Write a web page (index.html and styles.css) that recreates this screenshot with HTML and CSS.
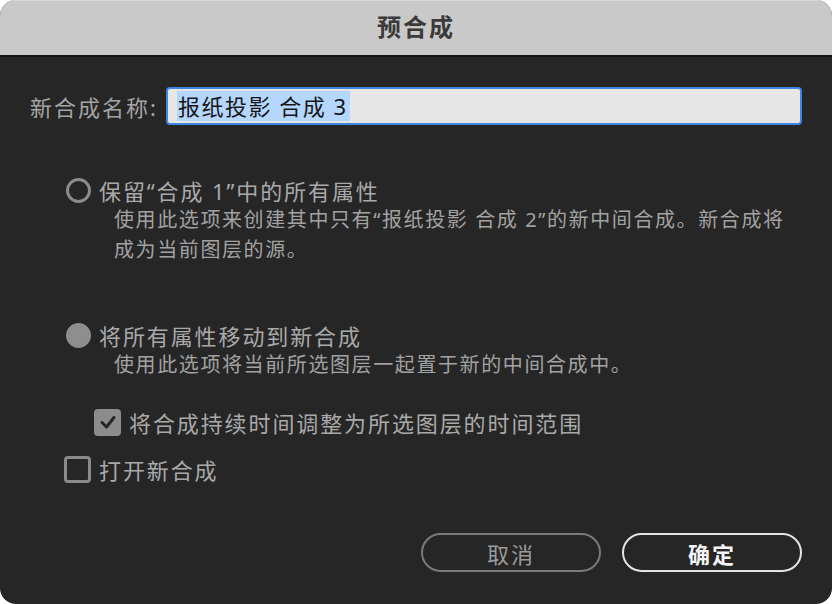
FILE: index.html
```html
<!DOCTYPE html>
<html lang="zh-CN">
<head>
    <meta charset="UTF-8">
    <title>预合成</title>
    <link rel="stylesheet" href="styles.css">
</head>
<body>
    <div class="window">
        <!-- Title bar -->
        <div class="title-bar">预合成</div>

        <div class="content">
            <div class="name-row">
                <span class="name-label">新合成名称:</span>
                <div class="name-input"><span class="selected">报纸投影 合成 3</span></div>
            </div>

            <div class="option option-first">
                <span class="radio"></span>
                <span class="option-label">保留“合成 1”中的所有属性</span>
            </div>
            <p class="desc">使用此选项来创建其中只有“报纸投影 合成 2”的新中间合成。新合成将<br>成为当前图层的源。</p>

            <div class="option option-second">
                <span class="radio radio-on"></span>
                <span class="option-label">将所有属性移动到新合成</span>
            </div>
            <p class="desc">使用此选项将当前所选图层一起置于新的中间合成中。</p>

            <div class="check-row check-indent">
                <span class="checkbox checkbox-on">
                    <svg width="20" height="20" viewBox="0 0 20 20"><polyline points="4,10.5 8.5,15 16,5.5" fill="none" stroke="#262626" stroke-width="3" stroke-linecap="round" stroke-linejoin="round"/></svg>
                </span>
                <span class="option-label">将合成持续时间调整为所选图层的时间范围</span>
            </div>

            <div class="check-row check-open">
                <span class="checkbox"></span>
                <span class="option-label">打开新合成</span>
            </div>

            <div class="buttons">
                <button class="btn btn-cancel">取消</button>
                <button class="btn btn-ok">确定</button>
            </div>
        </div>
    </div>
</body>
</html>
```

FILE: styles.css
```css
body {
    margin: 0;
    background: #ffffff;
    font-family: "Noto Sans", "Noto Sans CJK SC", sans-serif;
}

.window {
    width: 832px;
    height: 604px;
    border-radius: 16px;
    overflow: hidden;
    background: #262626;
    display: flex;
    flex-direction: column;
}

/* Title bar */
.title-bar {
    height: 57px;
    flex-shrink: 0;
    box-sizing: border-box;
    background: #c9c9c9;
    border-top: 1px solid #d8d8d8;
    border-bottom: 2px solid #141414;
    padding-bottom: 5px;
    display: flex;
    align-items: center;
    justify-content: center;
    font-size: 24px;
    font-weight: bold;
    letter-spacing: 2px;
    color: #3a3a3a;
}

.content {
    display: flex;
    flex-direction: column;
    color: #a8a8a8;
}

.name-row {
    margin-top: 30px;
    height: 38px;
    display: flex;
    align-items: center;
    padding: 0 30px;
}

.name-label {
    font-size: 22px;
    letter-spacing: 2px;
    width: 136px;
    color: #a4a4a4;
}

.name-input {
    flex: 1;
    height: 38px;
    box-sizing: border-box;
    border: 2px solid #3d86e4;
    border-radius: 4px;
    background: #e6e6e6;
    display: flex;
    align-items: center;
    padding-left: 9px;
}

.selected {
    background: #b5d6fd;
    color: #161616;
    font-size: 22px;
    letter-spacing: 1.5px;
    line-height: 30px;
    padding: 0 2px 0 1px;
}

/* Radio options */
.option {
    height: 28px;
    display: flex;
    align-items: center;
    gap: 8px;
    padding-left: 66px;
}

.option-first {
    margin-top: 51px;
}

.option-second {
    margin-top: 56px;
}

.option-label {
    font-size: 22px;
    letter-spacing: 1.9px;
    color: #a9a9a9;
}

.radio {
    width: 25px;
    height: 25px;
    box-sizing: border-box;
    border: 3px solid #8c8c8c;
    border-radius: 50%;
}

.radio-on {
    background: #8e8e8e;
    border-color: #8e8e8e;
}

.desc {
    margin: 1px 0 0 0;
    padding-left: 114px;
    font-size: 20px;
    letter-spacing: 1.6px;
    line-height: 30px;
    color: #a2a2a2;
}

/* Checkboxes */
.check-row {
    height: 28px;
    display: flex;
    align-items: center;
    gap: 8px;
}

.check-indent {
    margin-top: 28px;
    padding-left: 94px;
}

.check-open {
    margin-top: 19px;
    padding-left: 64px;
}

.checkbox {
    width: 27px;
    height: 27px;
    box-sizing: border-box;
    border: 3px solid #8a8a8a;
    border-radius: 4px;
    display: flex;
    align-items: center;
    justify-content: center;
}

.checkbox-on {
    background: #8c8c8c;
    border-color: #8c8c8c;
}

/* Buttons */
.buttons {
    margin-top: 50px;
    display: flex;
    justify-content: flex-end;
    gap: 21px;
    padding-right: 30px;
}

.btn {
    width: 180px;
    height: 39px;
    border-radius: 20px;
    background: transparent;
    font-family: inherit;
    font-size: 22px;
    letter-spacing: 2px;
    cursor: pointer;
}

.btn-cancel {
    border: 2px solid #7a7a7a;
    color: #9a9a9a;
}

.btn-ok {
    border: 2px solid #e4e4e4;
    color: #f4f4f4;
    font-weight: bold;
}
```
